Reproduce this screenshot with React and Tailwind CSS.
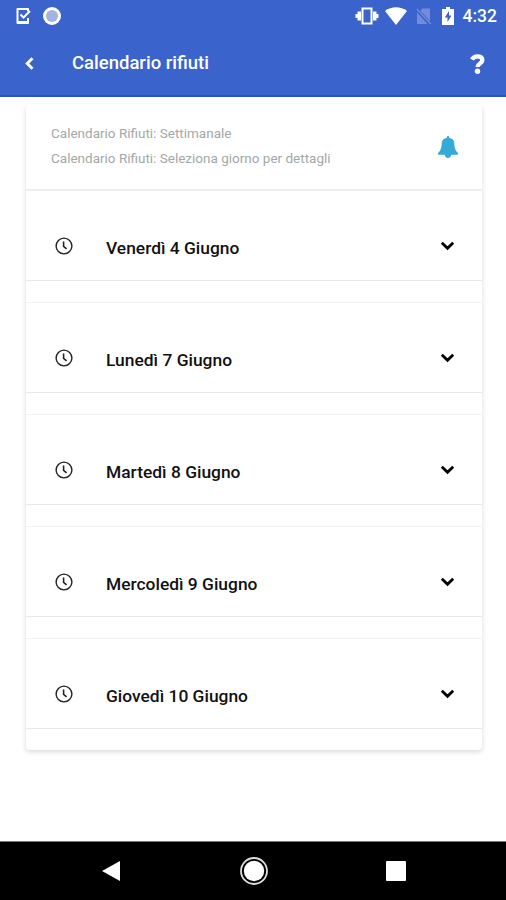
const days = ["Venerdì 4 Giugno", "Lunedì 7 Giugno", "Martedì 8 Giugno", "Mercoledì 9 Giugno", "Giovedì 10 Giugno"];

const ClockIcon = () => {
  return (
    <svg className="block size-[18px]" viewBox="0 0 18 18" fill="none" stroke="#222" strokeWidth="1.4">
      <circle cx="9" cy="9" r="7.9" />
      <path d="M8.600 4.400v4.900l3 2.500" strokeWidth="1.600" />
    </svg>
  );
};

const BellIcon = () => {
  return (
    <svg className="block size-[22px]" viewBox="0 0 1792 1792" fill="#35a9d8">
      <path d="M816 1696q0-16-16-16-59 0-101.500-42.500T656 1536h-16l256 176zm912-288q0 52-38 90t-90 38h-448q0 106-75 181t-181 75-181-75-75-181H192q-52 0-90-38t-38-90q50-42 91-88t85-119.500 74.500-158.500 50-206T384 576q0-152 117-282.500T808 136q-8-19-8-40 0-40 28-68t68-28 68 28 28 68q0 21-8 40 190 28 307 158.500T1408 576q0 139 19.500 260t50 206 74.500 158.500 85 119.500 91 88z" />
    </svg>
  );
};

const StatusBar = () => {
  return (
    <div className="flex h-8 items-center justify-between pl-4 pr-[9px] text-white">
      <div className="flex items-center gap-[12px]">
        <svg className="block h-[18px] w-[15px]" viewBox="0 0 15 18" fill="none">
          <path d="M12 4.500V2H1.500v14H12v-5" stroke="white" strokeWidth="2" strokeLinejoin="round" />
          <path d="M1 14h11.500v3H1z" fill="white" />
          <path d="M4.500 7.500l3 3 6.500-6.500" stroke="white" strokeWidth="2" />
        </svg>
        <svg className="block size-[18px]" viewBox="0 0 18 18">
          <circle cx="9" cy="9" r="9" fill="white" />
          <circle cx="9" cy="9" r="6" fill="#a3b3e4" />
        </svg>
      </div>
      <div className="flex items-center">
        <svg className="mr-[6px] block h-[18px] w-6" viewBox="0 0 24 18" fill="white">
          <path d="M.500 7h2v4h-2zM2.500 4.500H6v9H2.500zM18 4.500h3.500v9H18zM21.500 7h2v4h-2z" />
          <rect x="7.500" y="1.500" width="9" height="15" fill="#3a63cb" stroke="white" strokeWidth="2" />
        </svg>
        <svg className="mr-[9px] block h-[18px] w-[22px]" viewBox="0 0 22 18" fill="white">
          <path d="M0 3.900C6.500-1.100 15.500-1.100 22 3.900L11 18z" />
        </svg>
        <svg className="mr-[10px] block h-[18px] w-4" viewBox="0 0 16 18">
          <path d="M6 1.500h8v12.500L4.500 4zM1 5.500l10.500 11.500H1z" fill="#728cda" />
          <path d="M.8 2l14 15" stroke="#728cda" strokeWidth="1.400" />
        </svg>
        <svg className="mr-[9px] block h-[18px] w-3" viewBox="0 0 12 18">
          <path d="M4 0h4v2h4v16H0V2h4z" fill="white" />
          <path d="M7 4L2.800 10.500h2.700V15l4-6.500H7z" fill="#3a63cb" />
        </svg>
        <span className="pt-px text-[17.500px] font-medium leading-none">4:32</span>
      </div>
    </div>
  );
};

const Header = () => {
  return (
    <header className="h-[97px] border-b-2 border-[#2d53bd] bg-[#3a63cb]">
      <StatusBar />
      <div className="flex h-[63px] items-center pl-[25px] pr-[21px] text-white">
        <svg className="block h-[13px] w-[9px]" viewBox="0 0 9 13" fill="none" stroke="white" strokeWidth="2.900">
          <path d="M7.500 1.200L2.200 6.500l5.300 5.300" />
        </svg>
        <h1 className="ml-[38px] flex-1 pt-px text-[18.500px] font-medium">Calendario rifiuti</h1>
        <svg className="block h-5 w-[15px]" viewBox="0 0 15 20" fill="none">
          <path
            d="M2 5.600C3.400 3 5.200 2.300 7.500 2.300c3 0 4.900 1.500 4.900 3.700 0 3.500-4.900 3.400-4.900 7"
            stroke="white"
            strokeWidth="4.300"
          />
          <circle cx="7.500" cy="17.300" r="2.700" fill="white" />
        </svg>
      </div>
    </header>
  );
};

const DayRow = ({ label, last }) => {
  return (
    <li>
      <div className="flex h-[90px] items-center border-b border-[#e8e8e8] pl-[29px] pr-[27px] pt-5">
        <ClockIcon />
        <span className="ml-[33px] flex-1 pt-[5px] text-[17.400px] font-medium text-[#111]">{label}</span>
        <svg className="block h-[10px] w-[15px]" viewBox="0 0 15 10" fill="none" stroke="black" strokeWidth="2.900">
          <path d="M1.800 1.800l5.700 5.400 5.700-5.400" />
        </svg>
      </div>
      <div className={last ? "h-[21px]" : "h-[22px] border-b border-[#f3f3f3]"} />
    </li>
  );
};

const NavBar = () => {
  return (
    <nav className="flex h-[59px] items-center justify-between border-t border-[#777] bg-black pl-[101px] pr-[100px]">
      <svg className="block size-5" viewBox="0 0 20 20" fill="white">
        <path d="M1 10L19 0v20z" />
      </svg>
      <svg className="block size-7" viewBox="0 0 28 28">
        <circle cx="14" cy="14" r="13" fill="none" stroke="#ddd" strokeWidth="1.800" />
        <circle cx="14" cy="14" r="10.200" fill="white" />
      </svg>
      <div className="size-5 rounded-[1px] bg-white" />
    </nav>
  );
};

export default function App() {
  return (
    <div className="flex h-[900px] w-[506px] flex-col overflow-hidden bg-white font-[Roboto,sans-serif]">
      <Header />
      <main className="flex-1 pl-[26px] pr-6 pt-[7px]">
        <section className="rounded-[4px] bg-white shadow-[0_2px_5px_rgba(0,0,0,0.15)]">
          <div className="flex h-[87px] items-center justify-between border-b-2 border-[#eeeeee] pl-[25px] pr-[23px]">
            <div className="pb-0.5 text-[13.500px] leading-[25px] text-[#a3a8a8]">
              <p>Calendario Rifiuti: Settimanale</p>
              <p>Calendario Rifiuti: Seleziona giorno per dettagli</p>
            </div>
            <BellIcon />
          </div>
          <ul>
            {days.map((day, i) => (
              <DayRow key={day} label={day} last={i === days.length - 1} />
            ))}
          </ul>
        </section>
      </main>
      <NavBar />
    </div>
  );
}
